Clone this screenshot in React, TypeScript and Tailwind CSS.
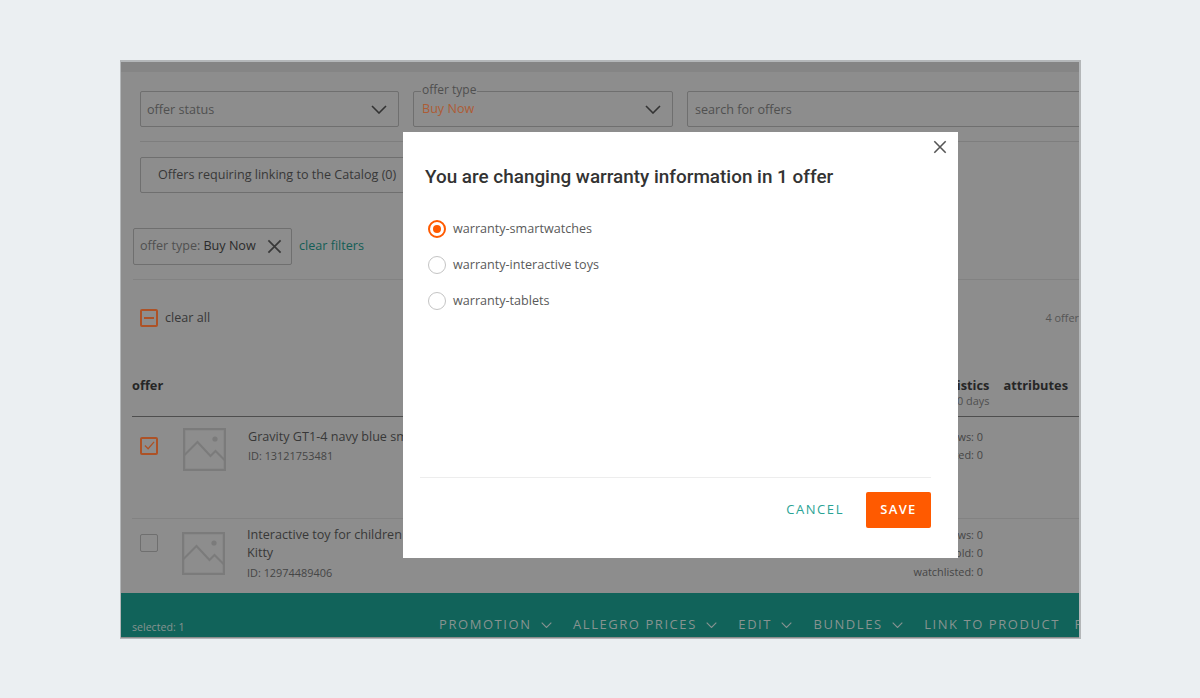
import { ReactNode } from 'react';

const open = "font-['Open_Sans',sans-serif]";

function Chevron({ className = '' }: { className?: string }) {
  return (
    <svg viewBox="0 0 16 9" className={className} fill="none" stroke="currentColor" strokeWidth="1.6">
      <path d="M1 1l7 7 7-7" />
    </svg>
  );
}

function Cross({ className = '' }: { className?: string }) {
  return (
    <svg viewBox="0 0 16 16" className={className} fill="none" stroke="currentColor" strokeWidth="1.8">
      <path d="M1.5 1.5l13 13M14.5 1.5l-13 13" />
    </svg>
  );
}

function Picture({ className = '' }: { className?: string }) {
  return (
    <svg viewBox="0 0 43 43" className={className} fill="none" stroke="#7b7b7b" strokeWidth="2">
      <rect x="1" y="1" width="41" height="41" strokeWidth="2.4" />
      <path d="M1.5 27l13-13 13 14 5-5 9 9" />
      <circle cx="32" cy="11" r="2.6" fill="#7b7b7b" stroke="none" />
    </svg>
  );
}

function Stats({ lines }: { lines: string[] }) {
  return (
    <div className="ml-auto mr-[96px] flex flex-col items-end text-[10.9px] leading-[18.5px] text-[#454545]">
      {lines.map(l => <span key={l}>{l}</span>)}
    </div>
  );
}

function Radio({ on, children }: { on?: boolean; children: ReactNode }) {
  return (
    <div className="flex h-9 items-center">
      <span className={`flex h-[18px] w-[18px] items-center justify-center rounded-full border ${on ? 'border-2 border-[#ff5a00]' : 'border-[#c4c4c4]'}`}>
        {on && <span className="h-2 w-2 rounded-full bg-[#ff5a00]" />}
      </span>
      <span className={`ml-[7px] mt-[1px] text-[12.6px] text-[#5a5a5a] ${open}`}>{children}</span>
    </div>
  );
}

function Action({ label, arrow = true }: { label: string; arrow?: boolean }) {
  return (
    <span className="flex shrink-0 items-center gap-[9px] whitespace-nowrap">
      {label}
      {arrow && <Chevron className="mt-[3px] w-[11px]" />}
    </span>
  );
}

export default function App() {
  return (
    <div className="h-[698px] w-[1200px] bg-[#ebeff2] pl-[120px] pt-[60px]">
      <div className={`relative h-[579px] w-[961px] overflow-hidden border-2 border-b-[1px] border-l-[1px] border-[#b4b7b9] bg-[#8d8d8d] ${open}`}>
        <div className="h-[10px] bg-[#858585]" />

        <div className="ml-[19px] mt-[19px] flex gap-[14px]">
          <div className="flex h-9 w-[259px] shrink-0 items-center justify-between rounded-[2px] border border-[#6f6f6f] pl-[6px] pr-[11px] text-[12.6px] text-[#505050]">
            <span className="mt-[2px]">offer status</span>
            <Chevron className="w-[16px] text-[#333]" />
          </div>
          <div className="relative flex h-9 w-[260px] shrink-0 items-center justify-between rounded-[2px] border border-[#6f6f6f] pl-[8px] pr-[11px] text-[12.6px] text-[#ad5c35]">
            <span className="absolute -top-[10px] left-[7px] bg-[#8d8d8d] px-[1px] text-[12px] leading-4 text-[#4f4f4f]">offer type</span>
            <span>Buy Now</span>
            <Chevron className="w-[16px] text-[#333]" />
          </div>
          <div className="flex h-9 w-[420px] shrink-0 items-center rounded-[2px] border border-[#6f6f6f] pl-[7px] pt-[2px] text-[12.6px] text-[#505050]">search for offers</div>
        </div>
        <div className="ml-[19px] mt-[14px] h-px bg-[#7e7e7e]" />

        <div className="ml-[19px] mt-[15px] flex h-[36px] w-[299px] items-center rounded-[2px] border border-[#6f6f6f] pl-[17px] text-[12.6px] text-[#383838]">
          Offers requiring linking to the Catalog (0)
        </div>

        <div className="ml-[12px] mt-[35px] flex items-center">
          <div className="flex h-[37px] w-[159px] items-center rounded-[2px] border border-[#6f6f6f] pl-[6px] text-[12.6px] text-[#505050]">
            offer type:<span className="ml-[3px] text-[#2b2b2b]">Buy Now</span>
            <Cross className="ml-[11px] w-[15px] text-[#383838]" />
          </div>
          <span className="ml-[7px] text-[12.6px] text-[#135e56]">clear filters</span>
        </div>
        <div className="ml-[12px] mt-[14px] h-px bg-[#828282]" />

        <div className="ml-[19px] mt-[29px] flex items-center text-[12.6px] text-[#383838]">
          <span className="flex h-[18px] w-[18px] items-center justify-center rounded-[2px] border-2 border-[#ad5226]">
            <span className="h-[2px] w-[10px] bg-[#ad5226]" />
          </span>
          <span className="ml-[7px]">clear all</span>
          <span className="ml-auto whitespace-nowrap text-[10.9px] text-[#555]">4 offer</span>
        </div>

        <div className="ml-[11px] mt-[47px] flex h-[42px] border-b border-[#4e4e4e]">
          <span className="mt-[1px] text-[12.8px] font-bold leading-[18px] text-[#262626]">offer</span>
          <div className="ml-auto mr-[14px] mt-[2px] flex flex-col items-end leading-[16.5px]">
            <span className="text-[12.8px] font-bold text-[#262626]">statistics</span>
            <span className="text-[10.9px] text-[#4f4f4f]">last 30 days</span>
          </div>
          <span className="mr-[11px] mt-[1px] text-[12.8px] font-bold leading-[18px] text-[#262626]">attributes</span>
        </div>

        <div className="ml-[11px] flex h-[102px] items-start border-b border-[#828282]">
          <span className="ml-[8px] mt-[20px] flex h-[18px] w-[18px] items-center justify-center rounded-[2px] border-2 border-[#ad5226] text-[#ad5226]">
            <svg viewBox="0 0 12 10" className="w-[11px]" fill="none" stroke="currentColor" strokeWidth="1.4"><path d="M1 5l3.5 3.5L11 1" /></svg>
          </span>
          <Picture className="ml-[25px] mt-[11px] w-[43px]" />
          <div className="ml-[22px] mt-[11px] text-[#383838]">
            <div className="text-[12.6px] leading-[18px]">Gravity GT1-4 navy blue smartwatch</div>
            <div className="mt-[1px] text-[10.9px] leading-[18px] text-[#454545]">ID: 13121753481</div>
          </div>
          <div className="ml-auto mt-[11px] flex">
            <Stats lines={['views: 0', 'watchlisted: 0']} />
          </div>
        </div>

        <div className="ml-[11px] flex h-[74px] items-start">
          <span className="ml-[8px] mt-[15px] h-[18px] w-[18px] rounded-[2px] border border-[#6f6f6f]" />
          <Picture className="ml-[24px] mt-[13px] w-[43px]" />
          <div className="ml-[22px] mt-[7px] w-[165px] text-[#383838]">
            <div className="text-[12.6px] leading-[18px]">Interactive toy for children Kitty</div>
            <div className="mt-[2px] text-[10.9px] leading-[18px] text-[#454545]">ID: 12974489406</div>
          </div>
          <div className="ml-auto mt-[7px] flex">
            <Stats lines={['views: 0', 'sold: 0', 'watchlisted: 0']} />
          </div>
        </div>

        <div className="flex h-[44px] items-end bg-[#11635a] pb-[4px] pl-[11px] text-[#879391]">
          <span className="mb-[-3px] w-[307px] shrink-0 text-[10.6px]">selected: 1</span>
          <div className="flex gap-[21.5px] text-[13px] leading-[18px] tracking-[0.12em]">
            <Action label="PROMOTION" />
            <Action label="ALLEGRO PRICES" />
            <Action label="EDIT" />
            <Action label="BUNDLES" />
            <Action label="LINK TO PRODUCT" arrow={false} />
            <span className="-ml-[7px]"><Action label="PRICES" arrow={false} /></span>
          </div>
        </div>

        <div className="absolute left-[282px] top-[70px] flex h-[426px] w-[555px] flex-col bg-white pl-[17px] pr-[27px] font-['Roboto',sans-serif]">
          <button className="absolute right-[11px] top-[8px] text-[#555]"><Cross className="w-[14px]" /></button>
          <h2 className="ml-[5px] mt-[32px] text-[18.9px] font-medium leading-[26px] text-[#333]">You are changing warranty information in 1 offer</h2>
          <div className="ml-[8px] mt-[21px]">
            <Radio on>warranty-smartwatches</Radio>
            <Radio>warranty-interactive toys</Radio>
            <Radio>warranty-tablets</Radio>
          </div>
          <div className="mt-auto flex h-[81px] items-start justify-end border-t border-[#ededed] pt-[14px]">
            <button className={`mr-[22px] h-9 text-[13px] tracking-[0.12em] text-[#2aa394] ${open}`}>CANCEL</button>
            <button className={`h-9 w-[65px] rounded-[2px] bg-[#ff5a00] text-[13px] font-semibold tracking-[0.1em] text-white ${open}`}>SAVE</button>
          </div>
        </div>
      </div>
    </div>
  );
}
